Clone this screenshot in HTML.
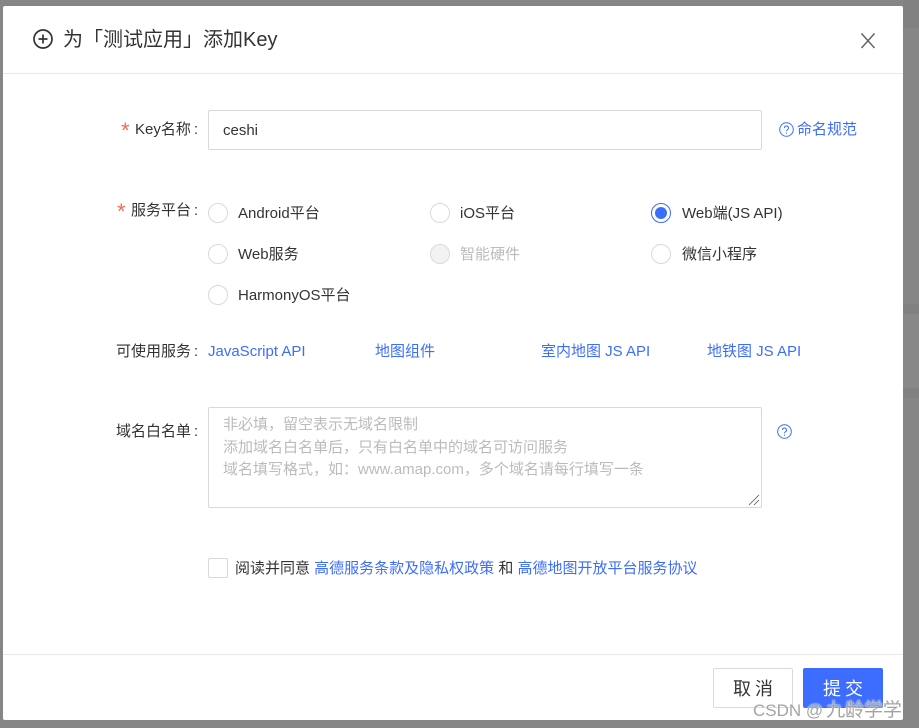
<!DOCTYPE html>
<html lang="zh">
<head>
<meta charset="utf-8">
<title>添加Key</title>
<style>
html,body{margin:0;padding:0;width:919px;height:728px;overflow:hidden;background:#858685;font-family:"Liberation Sans","Noto Sans CJK SC",sans-serif;}
.a{position:absolute;white-space:nowrap;line-height:20px;font-size:15px;color:#333;}
.l{color:#3d6dff;}
.r{position:absolute;width:18px;height:18px;border:1px solid #d9d9d9;border-radius:50%;background:#fff;}
.req{position:absolute;font-size:22px;line-height:20px;color:#f56c4f;}
.c{margin-left:3px;}
#dlg{position:absolute;left:3px;top:6px;width:900px;height:714px;background:#fff;border-radius:2px;}
.box{position:absolute;border:1px solid #d9d9d9;border-radius:2px;background:#fff;box-sizing:border-box;}
.band{position:absolute;left:903px;width:16px;}
.br{font-family:"Liberation Sans","Noto Sans CJK JP",sans-serif;position:relative;}
</style>
</head>
<body>
<div class="band" style="top:0;height:28px;background:#808180"></div>
<div class="band" style="top:304px;height:10px;background:#808180"></div>
<div class="band" style="top:314px;height:74px;background:#888888"></div>
<div class="band" style="top:388px;height:10px;background:#808180"></div>
<div id="dlg"></div>
<div style="position:absolute;left:3px;top:73px;width:900px;height:1px;background:#e8e8e8"></div>
<div style="position:absolute;left:3px;top:654px;width:900px;height:1px;background:#e8e8e8"></div>

<svg style="position:absolute;left:32px;top:29px" width="22" height="22" viewBox="0 0 22 22" fill="none" stroke="#333" stroke-width="1.7"><circle cx="11" cy="10" r="9"/><path d="M11 5.500v9M6.500 10h9"/></svg>
<div class="a" style="left:63px;top:27px;font-size:20px;line-height:26px;color:#333">为<span class="br">「</span>测试应用<span class="br">」</span>添加Key</div>
<svg style="position:absolute;left:860px;top:33px" width="16" height="16" viewBox="0 0 16 16" fill="none" stroke="#666" stroke-width="1.500"><path d="M1.500 .5l13 14.500M14.500 .5l-13 14.500"/></svg>

<div class="req" style="left:121px;top:121px">*</div>
<div class="a" style="left:135px;top:120px">Key名称<span class="c">:</span></div>
<div class="box" style="left:208px;top:110px;width:554px;height:40px"></div>
<div class="a" style="left:223px;top:121px">ceshi</div>
<svg style="position:absolute;left:779px;top:122px" width="15" height="15" viewBox="0 0 15 15" fill="none" stroke="#3d6dff" stroke-width="1"><circle cx="7.5" cy="7.5" r="6.800"/><path d="M5.500 6a2 2 0 1 1 3 1.700c-.7.4-1 .8-1 1.600"/><path d="M7.500 10.600v1.200"/></svg>
<div class="a l" style="left:797px;top:120px">命名规范</div>

<div class="req" style="left:117px;top:202px">*</div>
<div class="a" style="left:131px;top:201px">服务平台<span class="c">:</span></div>

<div class="r" style="left:208px;top:203px"></div><div class="a" style="left:238px;top:204px">Android平台</div>
<div class="r" style="left:430px;top:203px"></div><div class="a" style="left:460px;top:204px">iOS平台</div>
<div class="r" style="left:651px;top:203px;border-color:#3d6dff"></div><div style="position:absolute;left:655px;top:207px;width:12px;height:12px;border-radius:50%;background:#3d6dff"></div><div class="a" style="left:682px;top:204px">Web端(JS API)</div>

<div class="r" style="left:208px;top:244px"></div><div class="a" style="left:238px;top:245px">Web服务</div>
<div class="r" style="left:430px;top:244px;background:#f2f2f2"></div><div class="a" style="left:460px;top:245px;color:#bbb">智能硬件</div>
<div class="r" style="left:651px;top:244px"></div><div class="a" style="left:682px;top:245px">微信小程序</div>

<div class="r" style="left:208px;top:285px"></div><div class="a" style="left:238px;top:286px">HarmonyOS平台</div>

<div class="a" style="left:116px;top:342px">可使用服务<span class="c">:</span></div>
<div class="a l" style="left:208px;top:342px">JavaScript API</div>
<div class="a l" style="left:375px;top:342px">地图组件</div>
<div class="a l" style="left:541px;top:342px">室内地图 JS API</div>
<div class="a l" style="left:707px;top:342px">地铁图 JS API</div>

<div class="a" style="left:116px;top:422px">域名白名单<span class="c">:</span></div>
<div class="box" style="left:208px;top:407px;width:554px;height:101px"></div>
<div class="a" style="left:223px;top:414px;line-height:22.500px;color:#bbb">非必填，留空表示无域名限制<br>添加域名白名单后，只有白名单中的域名可访问服务<br>域名填写格式，如：www.amap.com，多个域名请每行填写一条</div>
<svg style="position:absolute;left:748px;top:494px" width="12" height="12" viewBox="0 0 12 12" fill="none" stroke="#555" stroke-width="0.8"><path d="M1 11L11 1M6 11l5-5"/></svg>
<svg style="position:absolute;left:777px;top:424px" width="15" height="15" viewBox="0 0 15 15" fill="none" stroke="#3d6dff" stroke-width="1"><circle cx="7.5" cy="7.5" r="6.800"/><path d="M5.500 6a2 2 0 1 1 3 1.700c-.7.4-1 .8-1 1.600"/><path d="M7.500 10.600v1.200"/></svg>

<div class="box" style="left:208px;top:558px;width:20px;height:20px"></div>
<div class="a" style="left:235px;top:559px">阅读并同意 <span class="l">高德服务条款及隐私权政策</span> 和 <span class="l">高德地图开放平台服务协议</span></div>

<div class="box" style="left:713px;top:668px;width:80px;height:40px"></div>
<div class="a" style="left:713px;top:669px;width:80px;text-align:center;text-indent:4px;line-height:40px;font-size:18px;letter-spacing:4px">取消</div>
<div style="position:absolute;left:803px;top:668px;width:80px;height:40px;background:#3d6dff;border-radius:2px"></div>
<div class="a" style="left:803px;top:669px;width:80px;text-align:center;text-indent:4px;line-height:40px;font-size:18px;letter-spacing:4px;color:#fff">提交</div>

<div class="a" style="left:753px;top:699px;font-size:17px;line-height:24px;color:rgba(140,140,140,.8);text-shadow:0 0 1px #fff,0 0 2px #fff">CSDN @<span style="font-size:19px;margin-left:3px;letter-spacing:-.1px">九龄学学</span></div>
</body>
</html>
